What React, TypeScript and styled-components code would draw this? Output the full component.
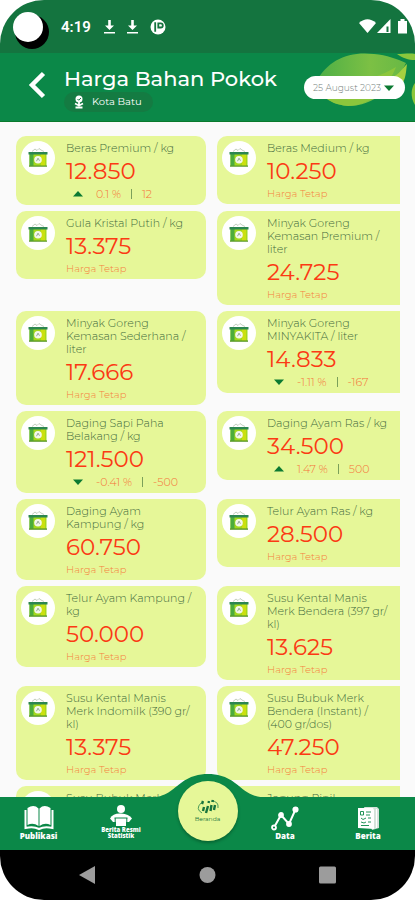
import React from "react";
import styled, { createGlobalStyle } from "styled-components";

const GlobalStyle = createGlobalStyle`
  * { box-sizing: border-box; }
  body { margin: 0; background: #ffffff; font-family: Montserrat, Inter, "Open Sans", sans-serif; }
  button, select { font: inherit; color: inherit; }
`;

const green = "#0b8848";
const lime = "#e6f798";

const Phone = styled.div`
  display: flex;
  flex-direction: column;
  height: 100vh;
  border-radius: 44px;
  overflow: hidden;
  background: #fafafa;
`;

const StatusBar = styled.div`
  display: flex;
  align-items: center;
  height: 53px;
  padding: 0 7px 0 13px;
  background: #14743f;
  color: #ffffff;
  flex-shrink: 0;
`;

const Camera = styled.div`
  width: 30px;
  height: 30px;
  border-radius: 50%;
  background: #ffffff;
  box-shadow: 4px 5px 0 2px #000000;
`;

const Clock = styled.span`
  margin: 0 13px 0 18px;
  font: 600 15px/20px Roboto, sans-serif;
`;

const StatusIcons = styled.div<{ $gap: number; $end?: boolean }>`
  display: flex;
  align-items: center;
  gap: ${(p) => p.$gap}px;
  margin-left: ${(p) => (p.$end ? "auto" : "0")};
  svg { display: block; }
`;

const Header = styled.header`
  position: relative;
  display: flex;
  align-items: flex-start;
  height: 69px;
  padding: 12px 10px 0 27px;
  background: ${green};
  border-bottom: 1px solid #0a7a2c;
  color: #ffffff;
  flex-shrink: 0;
`;

const Leaves = styled.svg`
  position: absolute;
  top: 0;
  right: 0;
`;

const BackButton = styled.button`
  width: 20px;
  height: 40px;
  padding: 0;
  margin-right: 17px;
  border: 0;
  background: none;
  svg { display: block; }
`;

const Heading = styled.div`
  flex: 1;
  min-width: 0;
`;

const Title = styled.h1`
  margin: 0;
  font-size: 21px;
  line-height: 27px;
  font-weight: 500;
  white-space: nowrap;
`;

const Place = styled.div`
  display: inline-flex;
  align-items: center;
  gap: 7px;
  height: 20px;
  padding: 0 11px 0 9px;
  border-radius: 10px;
  background: #147b42;
  font-size: 10px;
  line-height: 20px;
  vertical-align: top;
`;

const DateField = styled.label`
  position: relative;
  display: flex;
  align-items: center;
  width: 101px;
  height: 23px;
  margin-top: 11px;
  border-radius: 12px;
  background: #ffffff;
  svg { position: absolute; right: 11px; pointer-events: none; }
`;

const DateSelect = styled.select`
  appearance: none;
  width: 100%;
  height: 23px;
  padding: 0 20px 0 9px;
  border: 0;
  background: none;
  color: #74807b;
  font-size: 9px;
  font-weight: 300;
`;

const List = styled.main`
  flex: 1;
  min-height: 0;
  overflow-y: auto;
  scrollbar-width: none;
  display: grid;
  grid-template-columns: 190fr 183fr;
  grid-auto-rows: max-content;
  align-items: start;
  gap: 6px 11px;
  padding: 14px 15px 0 16px;
`;

const Card = styled.article<{ $cut: boolean }>`
  display: flex;
  gap: 11px;
  padding: 5px 0 4px 5px;
  border-radius: ${(p) => (p.$cut ? "10px 0 0 10px" : "10px")};
  background: ${lime};
`;

const Avatar = styled.div`
  display: flex;
  align-items: center;
  justify-content: center;
  width: 34px;
  height: 34px;
  border-radius: 50%;
  background: #ffffff;
  flex-shrink: 0;
`;

const CardText = styled.div`
  min-width: 0;
  padding-top: 1px;
`;

const Name = styled.h2`
  margin: 0;
  font-size: 11px;
  line-height: 13px;
  font-weight: 300;
  color: #3f6a3c;
  white-space: pre;
`;

const Price = styled.div`
  font-size: 23px;
  line-height: 32px;
  font-weight: 400;
  color: #fb3a14;
`;

const Steady = styled.div`
  font-size: 10px;
  line-height: 13px;
  font-weight: 300;
  color: #f5813f;
`;

const Trend = styled.div`
  display: flex;
  align-items: center;
  height: 14px;
  padding-left: 7px;
  font-size: 11px;
  line-height: 14px;
  font-weight: 300;
  color: #f5743a;
  svg { margin-right: 13px; }
`;

const Divider = styled.span`
  width: 1px;
  height: 10px;
  margin: 0 10px;
  background: #7ba05a;
`;

const BottomBar = styled.nav`
  position: relative;
  display: grid;
  grid-template-columns: 77fr 88fr 84fr 72fr 94fr;
  height: 53px;
  background: ${green};
  flex-shrink: 0;
`;

const Bump = styled.svg`
  position: absolute;
  left: 50%;
  bottom: 100%;
  margin-left: -64px;
  margin-bottom: -1px;
`;

const Tab = styled.a`
  display: flex;
  flex-direction: column;
  align-items: center;
  padding-top: 8px;
  color: #ffffff;
  text-decoration: none;
  svg { display: block; }
`;

const TabLabel = styled.span<{ $small?: boolean }>`
  font-family: "Open Sans", sans-serif;
  font-size: ${(p) => (p.$small ? 6 : 8)}px;
  line-height: ${(p) => (p.$small ? 6 : 10)}px;
  font-weight: 800;
  text-align: center;
  white-space: pre;
`;

const HomeTab = styled.a`
  position: absolute;
  left: 50%;
  top: -16px;
  display: flex;
  flex-direction: column;
  align-items: center;
  width: 60px;
  height: 60px;
  margin-left: -30px;
  padding-top: 18px;
  border-radius: 50%;
  background: ${lime};
  box-shadow: 0 2px 3px rgba(0, 50, 20, 0.4);
  color: #17733d;
  font-size: 6px;
  line-height: 8px;
  text-decoration: none;
`;

const SystemBar = styled.div`
  display: grid;
  grid-template-columns: repeat(3, 1fr);
  align-items: center;
  justify-items: center;
  height: 50px;
  padding: 0 27px;
  background: #000000;
  flex-shrink: 0;
`;

const SystemButton = styled.button`
  padding: 4px;
  border: 0;
  background: none;
  svg { display: block; }
`;

type Item = { name: string; price: string; percent?: string; change?: string };

const items: Item[] = [
  { name: "Beras Premium / kg", price: "12.850", percent: "0.1 %", change: "12" },
  { name: "Beras Medium / kg", price: "10.250" },
  { name: "Gula Kristal Putih / kg", price: "13.375" },
  { name: "Minyak Goreng\nKemasan Premium /\nliter", price: "24.725" },
  { name: "Minyak Goreng\nKemasan Sederhana /\nliter", price: "17.666" },
  { name: "Minyak Goreng\nMINYAKITA / liter", price: "14.833", percent: "-1.11 %", change: "-167" },
  { name: "Daging Sapi Paha\nBelakang / kg", price: "121.500", percent: "-0.41 %", change: "-500" },
  { name: "Daging Ayam Ras / kg", price: "34.500", percent: "1.47 %", change: "500" },
  { name: "Daging Ayam\nKampung / kg", price: "60.750" },
  { name: "Telur Ayam Ras / kg", price: "28.500" },
  { name: "Telur Ayam Kampung /\nkg", price: "50.000" },
  { name: "Susu Kental Manis\nMerk Bendera (397 gr/\nkl)", price: "13.625" },
  { name: "Susu Kental Manis\nMerk Indomilk (390 gr/\nkl)", price: "13.375" },
  { name: "Susu Bubuk Merk\nBendera (Instant) /\n(400 gr/dos)", price: "47.250" },
  { name: "Susu Bubuk Merk", price: "42.500" },
  { name: "Jagung Pipil", price: "8.500" },
];

const ScaleIcon = () => (
  <svg width="20" height="22" viewBox="0 0 20 22" aria-hidden="true">
    <path d="M4 4.500 7 2l2 1.500 2-2 2 1.500 3 1.500" fill="none" stroke="#b4c2ae" strokeWidth=".8" />
    <path d="M1.500 7h17v12h-17z" fill="#a4d81c" />
    <path d="M1.500 7h4v12h-4z" fill="#4cac3c" />
    <path d="M13 7h4v12h-4z" fill="#cbe010" />
    <path d="M.5 5h19v2.500H.5z" fill="#2c8650" />
    <path d="M1 18.400h18v1.400H1z" fill="#5c9a2a" />
    <circle cx="10" cy="12.800" r="3.800" fill="#f4f8ec" />
    <path d="m8.500 14.200 1.500-3 1.500 2.500" fill="none" stroke="#7b9380" strokeWidth=".8" />
  </svg>
);

const Arrow = ({ down }: { down?: boolean }) => (
  <svg width="10" height="6" viewBox="0 0 10 6" aria-hidden="true">
    <path d={down ? "M0 .5h10L5 6z" : "M0 5.500h10L5 0z"} fill="#0b7a32" />
  </svg>
);

const DownloadIcon = () => (
  <svg width="11" height="16" viewBox="0 0 11 16" aria-hidden="true">
    <path d="M4.200 1h2.600v5.500H10L5.500 11 1 6.500h3.200zM0 13h11v1.600H0z" fill="#fff" />
  </svg>
);

export default function App() {
  return (
    <>
      <GlobalStyle />
      <Phone>
        <StatusBar>
          <Camera />
          <Clock>4:19</Clock>
          <StatusIcons $gap={12}>
            <DownloadIcon />
            <DownloadIcon />
            <svg width="16" height="16" viewBox="0 0 16 16" aria-hidden="true">
              <circle cx="8" cy="8" r="7.500" fill="#fff" />
              <path d="M5.200 3.300v9.400M8.300 3.500v5h2.400a2 2 0 0 0 0-4.200H8.300" fill="none" stroke="#14743f" strokeWidth="1.800" />
            </svg>
          </StatusIcons>
          <StatusIcons $gap={1} $end>
            <svg width="17" height="15" viewBox="0 0 17 15" aria-hidden="true">
              <path d="M0 4Q8.500-3.500 17 4L8.500 14z" fill="#fff" />
            </svg>
            <svg width="14" height="15" viewBox="0 0 14 15" aria-hidden="true">
              <path d="M0 14 13.500 0v14z" fill="#fff" />
              <path d="M9.500 7.500h2V13h-2z" fill="#14743f" />
            </svg>
            <svg width="16" height="15" viewBox="0 0 16 15" aria-hidden="true">
              <path d="M6 2h2.500V0h4v2H15v12.500H6z" fill="#fff" />
            </svg>
          </StatusIcons>
        </StatusBar>

        <Header>
          <Leaves width="105" height="68" viewBox="0 0 105 68" aria-hidden="true">
            <defs>
              <linearGradient id="leaf" x1="0" y1="0" x2="1" y2="0">
                <stop offset="0" stopColor="#4cae46" />
                <stop offset=".6" stopColor="#7cc044" />
                <stop offset="1" stopColor="#68b845" />
              </linearGradient>
            </defs>
            <path d="M6 29C18 7 38-2 64 1c13 1 23 5 32 9C84 35 64 53 38 53 25 52 11 46 6 29z" fill="url(#leaf)" />
            <path d="M13 43C22 32 60 30 86 14 78 34 61 53 38 53 27 52 20 49 13 43z" fill="#8cc63c" />
            <path d="M87 1c7 0 13-1 18 0v6c-7 0-12-2-18-6z" fill="#8cc63c" />
            <path d="M97 11c-5 5-8 10-14 13l8 8c5-5 5-14 6-21z" fill="#a4d040" />
            <path d="M105 30c-4 5-5 14 0 22z" fill="#8cc63c" />
          </Leaves>
          <BackButton aria-label="Kembali">
            <svg width="20" height="40" viewBox="0 0 20 40">
              <path d="M16.500 8.500 5 20l11.500 11.500" fill="none" stroke="#fff" strokeWidth="4.500" />
            </svg>
          </BackButton>
          <Heading>
            <Title>Harga Bahan Pokok</Title>
            <Place>
              <svg width="12" height="14" viewBox="0 0 12 14" aria-hidden="true">
                <circle cx="6" cy="4" r="3.500" fill="#fff" />
                <path d="m4.500 4 1.200 1.200L8 3" fill="none" stroke="#147b42" strokeWidth="1" />
                <path d="M6 7v4M2 8.500l4 2 4-2M2.500 12.500h7" fill="none" stroke="#fff" strokeWidth="1.800" />
              </svg>
              Kota Batu
            </Place>
          </Heading>
          <DateField>
            <DateSelect aria-label="Tanggal" defaultValue="25 August 2023">
              <option>25 August 2023</option>
            </DateSelect>
            <Arrow down />
          </DateField>
        </Header>

        <List>
          {items.map((item, i) => (
            <Card key={i} $cut={i % 2 === 1}>
              <Avatar>
                <ScaleIcon />
              </Avatar>
              <CardText>
                <Name>{item.name}</Name>
                <Price>{item.price}</Price>
                {item.percent ? (
                  <Trend>
                    <Arrow down={item.percent.startsWith("-")} />
                    {item.percent}
                    <Divider />
                    {item.change}
                  </Trend>
                ) : (
                  <Steady>Harga Tetap</Steady>
                )}
              </CardText>
            </Card>
          ))}
        </List>

        <BottomBar>
          <Bump width="128" height="24" viewBox="0 0 128 24" aria-hidden="true">
            <path d="M0 24C22 24 26 17 37 9 46 2 55 0 64 0s18 2 27 9c11 8 15 15 37 15z" fill={green} />
          </Bump>
          <Tab href="#publikasi">
            <svg width="32" height="26" viewBox="0 0 32 26" aria-hidden="true">
              <path d="M4.500 3Q11-1 15.500 3.500v17.500Q10 17 4.500 20zM27.500 3Q21-1 16.500 3.500v17.500Q22 17 27.500 20z" fill="#fff" />
              <path d="M2.500 5v18q8-2 13.500 1 5.500-3 13.500-1V5" fill="none" stroke="#fff" strokeWidth="2" />
            </svg>
            <TabLabel>Publikasi</TabLabel>
          </Tab>
          <Tab href="#berita-resmi">
            <svg width="24" height="22" viewBox="0 0 24 22" aria-hidden="true">
              <circle cx="12" cy="4" r="4" fill="#fff" />
              <path d="M1 13.500Q4 8 12 8.500t11 5L20 17H4z" fill="#fff" />
              <path d="M5.500 13h13M6.200 13v8M17.800 13v8" fill="none" stroke={green} strokeWidth="1" />
              <path d="M7 14h10v7H7z" fill="#fff" />
            </svg>
            <TabLabel $small>{"Berita Resmi\nStatistik"}</TabLabel>
          </Tab>
          <span />
          <Tab href="#data">
            <svg width="30" height="26" viewBox="0 0 30 26" aria-hidden="true">
              <path d="m4 22.500 7-12.500 8 9 6.500-14.500" fill="none" stroke="#fff" strokeWidth="2" />
              <g fill={green} stroke="#fff" strokeWidth="1.800">
                <circle cx="4" cy="22.500" r="2" />
                <circle cx="11" cy="10" r="2" fill="#fff" />
                <circle cx="19" cy="19" r="2" fill="#fff" />
                <circle cx="25.500" cy="4.500" r="2.200" fill="#fff" />
              </g>
            </svg>
            <TabLabel>Data</TabLabel>
          </Tab>
          <Tab href="#berita">
            <svg width="24" height="26" viewBox="0 0 24 26" aria-hidden="true">
              <path d="M8 2h13l2 2v19l-7 2z" fill="#d3e2d9" />
              <path d="M2 3h15l1 2v19l-16-1z" fill="#fff" />
              <path d="M4.500 6.500h3v3.500h-3zM10 7h5M10 10h4M5 13l2 1.500L10 13M12 13h3M5 17l3 1 2-1M12 17h3M5 20.500h8" fill="none" stroke={green} strokeWidth=".9" />
              <path d="M20.500 4v19" stroke="#fff" strokeWidth="1.200" />
            </svg>
            <TabLabel>Berita</TabLabel>
          </Tab>
          <HomeTab href="#beranda" aria-current="page">
            <svg width="24" height="16" viewBox="0 0 24 16" aria-hidden="true">
              <path d="M5 4Q-1 10 6 14M15 2q8 0 7 7" fill="none" stroke="#4c9a58" strokeWidth="1" />
              <path d="m7 2-1 3M12 7l-2 7M8 8l-1 4M15.500 6l-1 6M13 2l-.5 2M17 1l-.5 2M19 6l-1 5" stroke="#17733d" strokeWidth="2.400" />
            </svg>
            Beranda
          </HomeTab>
        </BottomBar>

        <SystemBar>
          <SystemButton aria-label="Back">
            <svg width="17" height="18" viewBox="0 0 17 18">
              <path d="M16 0v18L0 9z" fill="#9c9c9c" />
            </svg>
          </SystemButton>
          <SystemButton aria-label="Home">
            <svg width="17" height="18" viewBox="0 0 17 18">
              <circle cx="8.500" cy="9" r="8" fill="#9c9c9c" />
            </svg>
          </SystemButton>
          <SystemButton aria-label="Recents">
            <svg width="17" height="18" viewBox="0 0 17 18">
              <rect y=".5" width="17" height="17" rx="1.500" fill="#9c9c9c" />
            </svg>
          </SystemButton>
        </SystemBar>
      </Phone>
    </>
  );
}
